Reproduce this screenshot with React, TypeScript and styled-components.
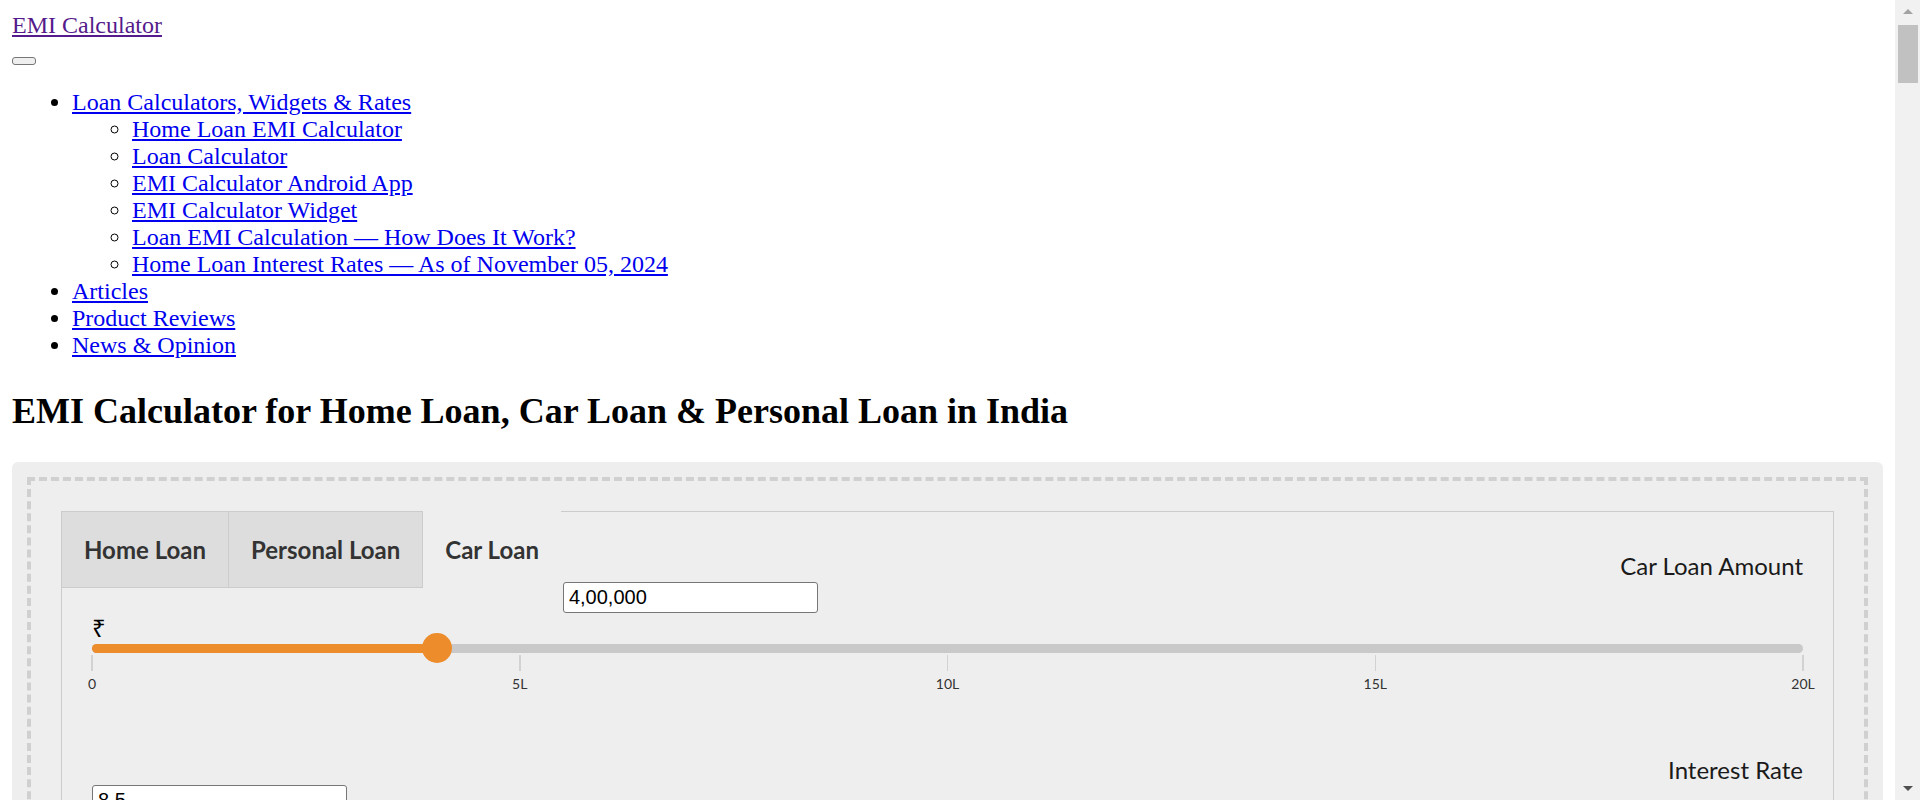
import React from "react";
import styled, { createGlobalStyle, css } from "styled-components";

const GlobalStyle = createGlobalStyle`
  html { background: #ffffff; }
  body {
    margin: 12px 37px 12px 12px;
    font-family: "Liberation Serif", "Times New Roman", serif;
    font-size: 24px;
    color: #000;
  }
`;

const Page = styled.div`
  min-height: 2400px;
`;

/* window scrollbar, drawn over the right edge of the viewport */
const ScrollRail = styled.div`
  position: fixed;
  top: 0;
  right: 0;
  bottom: 0;
  width: 25px;
  background: #f1f1f1;
  display: flex;
  flex-direction: column;
  align-items: center;
`;

const RailButton = styled.div`
  height: 23px;
  width: 100%;
  display: flex;
  align-items: center;
  justify-content: center;
  flex: none;
`;

const RailArrow = styled.span<{ $down?: boolean }>`
  width: 0;
  height: 0;
  border-left: 5px solid transparent;
  border-right: 5px solid transparent;
  ${(p) =>
    p.$down
      ? css`
          border-top: 5px solid #505050;
        `
      : css`
          border-bottom: 5px solid #a3a3a3;
        `}
`;

const RailThumb = styled.div`
  align-self: stretch;
  height: 58px;
  margin: 1.5px 2px 0 3px;
  background: #c1c1c1;
`;

const RailSpace = styled.div`
  flex: 1;
`;

const Masthead = styled.div`
  line-height: 27.6px;
`;

const SiteLink = styled.a`
  color: #551a8b;
  text-decoration: underline;
`;

const MenuToggle = styled.button`
  display: block;
  width: 24px;
  height: 8px;
  margin: 17px 0 0;
  padding: 0;
  background: #efefef;
  border: 1px solid #767676;
  border-radius: 3px;
`;

const NavList = styled.ul<{ $nested?: boolean }>`
  margin: ${(p) => (p.$nested ? "0" : "24px 0 0")};
  padding-left: 60px;
  line-height: 27px;
  list-style: ${(p) => (p.$nested ? "circle" : "disc")};
`;

const NavLink = styled.a`
  color: #0000ee;
  text-decoration: underline;
`;

const Title = styled.h1`
  font-size: 36px;
  font-weight: bold;
  margin: 31px 0 30px;
`;

const CalcBox = styled.div`
  background: #eeeeee;
  border-radius: 6px;
  padding: 15px;
`;

const DashedFrame = styled.div`
  border: 4.5px dashed #d0d0d0;
  padding: 30px;
`;

const Panel = styled.div`
  border: 1px solid #cccccc;
  border-top: none;
  font-family: Lato, "Open Sans", sans-serif;
  color: #222;
`;

const TabRow = styled.div`
  display: flex;
  align-items: flex-start;
`;

const TabList = styled.ul`
  display: flex;
  margin: 0;
  padding: 0;
  list-style: none;
`;

const Tab = styled.li<{ $active?: boolean }>`
  box-sizing: border-box;
  height: 77px;
  display: flex;
  align-items: center;
  padding: 0 22px;
  font-size: 24px;
  font-weight: 700;
  color: #333;
  white-space: nowrap;
  ${(p) =>
    p.$active
      ? css`
          background: transparent;
          padding-top: 1px;
        `
      : css`
          background: #dddddd;
          border-top: 1px solid #cccccc;
          border-bottom: 1px solid #cccccc;
          border-right: 1px solid #cccccc;
        `}
`;

const TabFill = styled.div`
  flex: 1;
  display: flex;
  flex-direction: column;
  border-top: 1px solid #cccccc;
`;

const FieldLabel = styled.div<{ $first?: boolean }>`
  align-self: flex-end;
  margin: ${(p) => (p.$first ? "39.5px 30px 0 0" : "63px 0 0")};
  font-size: 24px;
  line-height: 29px;
  color: #1a1a1a;
`;

const ValueInput = styled.input<{ $inline?: boolean }>`
  box-sizing: border-box;
  display: block;
  width: 255px;
  height: 31px;
  margin: 1.5px 0 0 ${(p) => (p.$inline ? "2px" : "0")};
  padding: 1px 5px;
  font-family: "Liberation Sans", Arial, sans-serif;
  font-size: 20px;
  color: #000;
  background: #fff;
  border: 1px solid #767676;
  border-radius: 3px;
  outline: none;
`;

const PanelBody = styled.div`
  display: flex;
  flex-direction: column;
  padding: 0 30px 40px;
`;

const Currency = styled.div`
  margin-top: 4px;
  font-family: "Noto Sans", "DejaVu Sans", sans-serif;
  font-size: 24px;
  line-height: 22px;
  color: #000;
`;

const SliderTrack = styled.div`
  position: relative;
  height: 9px;
  margin-top: 5px;
  border-radius: 5px;
  background: #c9c9c9;
`;

const SliderFill = styled.div`
  height: 100%;
  border-radius: 5px;
  background: #ed8c2b;
`;

const SliderThumb = styled.div`
  position: absolute;
  top: 50%;
  width: 30px;
  height: 30px;
  border-radius: 50%;
  background: #ed8c2b;
  transform: translate(-50%, -50%);
`;

const Scale = styled.div`
  display: flex;
  justify-content: space-between;
  margin-top: 2px;
`;

const Tick = styled.div`
  width: 0;
  display: flex;
  flex-direction: column;
  align-items: center;
`;

const TickLine = styled.div`
  width: 1.5px;
  height: 16px;
  flex: none;
  background: #d2d2d2;
`;

const TickLabel = styled.div`
  margin-top: 5px;
  font-size: 14px;
  line-height: 16px;
  color: #333;
  white-space: nowrap;
`;

type SliderProps = { value: number; max: number; ticks: string[]; unit?: string };

function Slider({ value, max, ticks, unit }: SliderProps) {
  const pct = (value / max) * 100;
  const at = `calc(${pct}% + 2.5px)`;
  return (
    <>
      {unit ? <Currency>{unit}</Currency> : null}
      <SliderTrack>
        <SliderFill style={{ width: at }} />
        <SliderThumb style={{ left: at }} />
      </SliderTrack>
      <Scale>
        {ticks.map((t) => (
          <Tick key={t}>
            <TickLine />
            <TickLabel>{t}</TickLabel>
          </Tick>
        ))}
      </Scale>
    </>
  );
}

const subLinks = [
  "Home Loan EMI Calculator",
  "Loan Calculator",
  "EMI Calculator Android App",
  "EMI Calculator Widget",
  "Loan EMI Calculation — How Does It Work?",
  "Home Loan Interest Rates — As of November 05, 2024",
];

export default function App() {
  return (
    <Page>
      <GlobalStyle />
      <Masthead>
        <SiteLink href="#">EMI Calculator</SiteLink>
      </Masthead>
      <MenuToggle aria-label="Menu" />
      <NavList>
        <li>
          <NavLink href="#">Loan Calculators, Widgets &amp; Rates</NavLink>
          <NavList $nested>
            {subLinks.map((s) => (
              <li key={s}>
                <NavLink href="#">{s}</NavLink>
              </li>
            ))}
          </NavList>
        </li>
        <li>
          <NavLink href="#">Articles</NavLink>
        </li>
        <li>
          <NavLink href="#">Product Reviews</NavLink>
        </li>
        <li>
          <NavLink href="#">News &amp; Opinion</NavLink>
        </li>
      </NavList>
      <Title>EMI Calculator for Home Loan, Car Loan &amp; Personal Loan in India</Title>
      <CalcBox>
        <DashedFrame>
          <Panel>
            <TabRow>
              <TabList>
                <Tab>Home Loan</Tab>
                <Tab>Personal Loan</Tab>
                <Tab $active>Car Loan</Tab>
              </TabList>
              <TabFill>
                <FieldLabel $first>Car Loan Amount</FieldLabel>
                <ValueInput $inline defaultValue="4,00,000" />
              </TabFill>
            </TabRow>
            <PanelBody>
              <Slider value={400000} max={2000000} unit="₹" ticks={["0", "5L", "10L", "15L", "20L"]} />
              <FieldLabel>Interest Rate</FieldLabel>
              <ValueInput defaultValue="8.5" />
              <Slider value={8.5} max={20} unit="%" ticks={["5", "7.5", "10", "12.5", "15", "17.5", "20"]} />
              <FieldLabel>Loan Tenure</FieldLabel>
              <ValueInput defaultValue="5" />
              <Slider value={5} max={7} unit="Yr" ticks={["0", "1", "2", "3", "4", "5", "6", "7"]} />
            </PanelBody>
          </Panel>
        </DashedFrame>
      </CalcBox>
      <ScrollRail aria-hidden>
        <RailButton>
          <RailArrow />
        </RailButton>
        <RailThumb />
        <RailSpace />
        <RailButton>
          <RailArrow $down />
        </RailButton>
      </ScrollRail>
    </Page>
  );
}
